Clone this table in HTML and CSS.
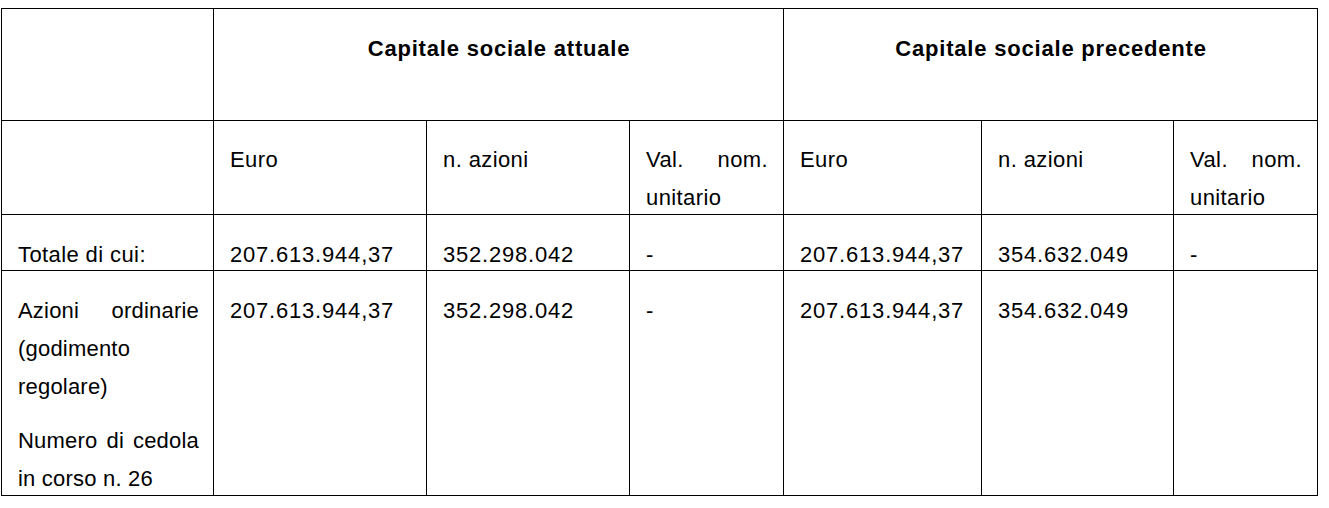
FILE: index.html
```html
<!DOCTYPE html>
<html lang="it">
<head>
<meta charset="utf-8">
<title>Capitale sociale</title>
<link rel="stylesheet" href="styles.css">
</head>
<body>
<table class="cap">
  <colgroup>
    <col class="w1"><col class="w2"><col class="w3"><col class="w4"><col class="w5"><col class="w6"><col class="w7">
  </colgroup>
  <tr class="r1">
    <td></td>
    <td colspan="3" class="hd">Capitale sociale attuale</td>
    <td colspan="3" class="hd">Capitale sociale precedente</td>
  </tr>
  <tr class="r2">
    <td></td>
    <td><p>Euro</p></td>
    <td><p>n. azioni</p></td>
    <td class="just"><p>Val. nom. unitario</p></td>
    <td><p>Euro</p></td>
    <td><p>n. azioni</p></td>
    <td class="just"><p>Val. nom. unitario</p></td>
  </tr>
  <tr class="r3">
    <td><p>Totale di cui:</p></td>
    <td class="num"><p>207.613.944,37</p></td>
    <td class="num"><p>352.298.042</p></td>
    <td><p>-</p></td>
    <td class="num"><p>207.613.944,37</p></td>
    <td class="num"><p>354.632.049</p></td>
    <td><p>-</p></td>
  </tr>
  <tr class="r4">
    <td class="just first"><p>Azioni ordinarie (godimento regolare)</p><p class="gap">Numero di cedola in corso n. 26</p></td>
    <td class="num"><p>207.613.944,37</p></td>
    <td class="num"><p>352.298.042</p></td>
    <td><p>-</p></td>
    <td class="num"><p>207.613.944,37</p></td>
    <td class="num"><p>354.632.049</p></td>
    <td></td>
  </tr>
</table>
</body>
</html>
```
FILE: styles.css
```css
html, body {
  background: #ffffff;
}
body {
  margin: 8px 0 0 1px;
  font-family: "Liberation Sans", Arial, sans-serif;
  font-size: 22px;
  line-height: 38px;
  color: #000000;
  letter-spacing: 0.4px;
}
.cap {
  border-collapse: collapse;
  table-layout: fixed;
  width: 1316px;
}
.w1 { width: 212px; }
.w2 { width: 213px; }
.w3 { width: 203px; }
.w4 { width: 154px; }
.w5 { width: 198px; }
.w6 { width: 192px; }
.w7 { width: 144px; }
.cap td {
  border: 1px solid #000000;
  vertical-align: top;
  padding: 21px 15px 0 16px;
  overflow: hidden;
}
.cap p {
  margin: 0;
}
.cap td p:last-child {
  margin-bottom: -6px;
}
.r1 td { height: 90px; padding-top: 21px; }
.r2 td { height: 73px; padding-top: 20px; }
.r3 td { height: 34px; }
.r4 td { height: 203px; }
.hd {
  text-align: center;
  font-weight: bold;
  letter-spacing: 0.8px;
}
.num {
  letter-spacing: 0.8px;
}
.just {
  text-align: justify;
}
.cap td.first {
  padding-right: 14px;
  letter-spacing: 0.2px;
}
.cap p.gap {
  margin-top: 16px;
}
```
